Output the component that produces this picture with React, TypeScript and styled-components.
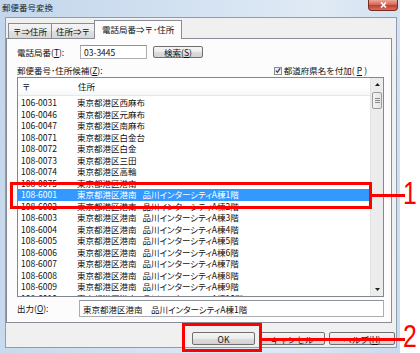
import React from 'react';
import styled, { createGlobalStyle } from 'styled-components';

interface Row {
  code: string;
  addr: string;
  bldg?: string;
  selected?: boolean;
}

const rows: Row[] = [
  { code: '106-0031', addr: '東京都港区西麻布' },
  { code: '106-0046', addr: '東京都港区元麻布' },
  { code: '106-0047', addr: '東京都港区南麻布' },
  { code: '108-0071', addr: '東京都港区白金台' },
  { code: '108-0072', addr: '東京都港区白金' },
  { code: '108-0073', addr: '東京都港区三田' },
  { code: '108-0074', addr: '東京都港区高輪' },
  { code: '108-0075', addr: '東京都港区港南' },
  { code: '108-6001', addr: '東京都港区港南', bldg: '品川インターシティA棟1階', selected: true },
  { code: '108-6002', addr: '東京都港区港南', bldg: '品川インターシティA棟2階' },
  { code: '108-6003', addr: '東京都港区港南', bldg: '品川インターシティA棟3階' },
  { code: '108-6004', addr: '東京都港区港南', bldg: '品川インターシティA棟4階' },
  { code: '108-6005', addr: '東京都港区港南', bldg: '品川インターシティA棟5階' },
  { code: '108-6006', addr: '東京都港区港南', bldg: '品川インターシティA棟6階' },
  { code: '108-6007', addr: '東京都港区港南', bldg: '品川インターシティA棟7階' },
  { code: '108-6008', addr: '東京都港区港南', bldg: '品川インターシティA棟8階' },
  { code: '108-6009', addr: '東京都港区港南', bldg: '品川インターシティA棟9階' },
  { code: '108-6010', addr: '東京都港区港南', bldg: '品川インターシティA棟10階' },
];

export default function App() {
  return (
    <Page>
      <GlobalStyle />
      <Window>
        <TitleBar>
          <Title>郵便番号変換</Title>
          <CloseButton>
            <svg width="7" height="6" viewBox="0 0 7 6">
              <path d="M1 0.5 L6 5.5 M6 0.5 L1 5.5" stroke="#fff" strokeWidth="1.6" />
            </svg>
          </CloseButton>
        </TitleBar>
        <Dialog>
          <TabStrip>
            <Tab>〒⇒住所</Tab>
            <Tab>住所⇒〒</Tab>
            <ActiveTab>電話局番⇒〒･住所</ActiveTab>
          </TabStrip>
          <Panel>
            <PhoneRow>
              <Label $width={63}>電話局番(<u>T</u>):</Label>
              <PhoneInput>03-3445</PhoneInput>
              <SmallButton>検索(<u>S</u>)</SmallButton>
            </PhoneRow>
            <CandRow>
              <Label>郵便番号･住所候補(<u>Z</u>):</Label>
              <CheckWrap>
                <CheckBox>
                  <svg width="7" height="7" viewBox="0 0 7 7">
                    <path d="M1 3.6 L2.8 5.6 L6 1" stroke="#1f3f6e" strokeWidth="1.4" fill="none" />
                  </svg>
                </CheckBox>
                都道府県名を付加(<u>P</u>)
              </CheckWrap>
            </CandRow>
            <ListBox>
              <ListBody>
                <Header>
                  <CodeCell>〒</CodeCell>
                  <AddrCell>住所</AddrCell>
                </Header>
                <Rows>
                  {rows.map((r) => (
                    <ListRow key={r.code} $selected={r.selected}>
                      <CodeCell>{r.code}</CodeCell>
                      <AddrCell>
                        {r.addr}
                        {r.bldg && <Bldg>{r.bldg}</Bldg>}
                      </AddrCell>
                    </ListRow>
                  ))}
                </Rows>
              </ListBody>
              <ScrollBar>
                <ScrollArrow>
                  <svg width="5" height="3" viewBox="0 0 5 3">
                    <path d="M2.5 0 L5 3 L0 3 Z" fill="#222" />
                  </svg>
                </ScrollArrow>
                <Track>
                  <Thumb>
                    <Grip />
                    <Grip />
                    <Grip />
                  </Thumb>
                </Track>
                <ScrollArrow>
                  <svg width="5" height="3" viewBox="0 0 5 3">
                    <path d="M0 0 L5 0 L2.5 3 Z" fill="#222" />
                  </svg>
                </ScrollArrow>
              </ScrollBar>
            </ListBox>
            <OutputRow>
              <Label $width={62}>出力(<u>O</u>):</Label>
              <OutputBox>東京都港区港南　品川インターシティA棟1階</OutputBox>
            </OutputRow>
          </Panel>
          <ButtonRow>
            <DialogButton $width={63}>OK</DialogButton>
            <DialogButton $width={66}>キャンセル</DialogButton>
            <DialogButton $width={66}>ヘルプ(<u>H</u>)</DialogButton>
          </ButtonRow>
        </Dialog>
      </Window>

      <MarkBox style={{ left: 10, top: 182, width: 362, height: 27 }} />
      <MarkLine style={{ left: 372, top: 194, width: 33 }} />
      <MarkDigit style={{ top: 178 }}>1</MarkDigit>

      <MarkBox style={{ left: 182, top: 323, width: 80, height: 29 }} />
      <MarkLine style={{ left: 262, top: 338, width: 143 }} />
      <MarkDigit style={{ top: 321 }}>2</MarkDigit>
    </Page>
  );
}

const GlobalStyle = createGlobalStyle`
  html, body {
    margin: 0;
    padding: 0;
    background: #ffffff;
  }
  body {
    font-family: "Noto Sans CJK JP", "Noto Sans", sans-serif;
    font-size: 8.5px;
    color: #111;
  }
  u {
    text-decoration-thickness: 1px;
    text-underline-offset: 1px;
  }
`;

const Page = styled.div`
  position: relative;
  width: 420px;
  height: 353px;
  overflow: hidden;
  display: flex;
`;

const Window = styled.div`
  width: 400px;
  height: 353px;
  display: flex;
  flex-direction: column;
  background: linear-gradient(100deg, #c3d6eb 0%, #d5e3f2 45%, #e0eaf5 70%, #c9dbee 100%);
`;

const TitleBar = styled.div`
  height: 17px;
  display: flex;
  justify-content: space-between;
  align-items: flex-start;
  padding: 0 2px 0 2px;
`;

const Title = styled.div`
  margin-top: 2px;
  line-height: 11px;
  color: #1b1b1b;
`;

const CloseButton = styled.div`
  width: 30px;
  height: 11px;
  box-sizing: border-box;
  display: flex;
  align-items: center;
  justify-content: center;
  border: 1px solid #7a2a22;
  border-top: none;
  border-radius: 0 0 4px 4px;
  background: linear-gradient(#e9a89c 0%, #d7695b 45%, #c2402f 55%, #d5705f 100%);
`;

const Dialog = styled.div`
  flex: 1;
  margin: 0 3px 5px 5px;
  border: 1px solid #8e9caf;
  background: #f0f0f0;
  display: flex;
  flex-direction: column;
`;

const TabStrip = styled.div`
  height: 20px;
  box-sizing: border-box;
  padding: 2px 0 0 2px;
  display: flex;
  align-items: flex-end;
`;

const Tab = styled.div`
  height: 15px;
  box-sizing: border-box;
  padding: 0 4px;
  display: flex;
  align-items: center;
  border: 1px solid #898c95;
  border-bottom: none;
  margin-right: -1px;
  background: linear-gradient(#f4f4f4 0%, #ececec 50%, #e0e0e0 51%, #d8d8d8 100%);
  line-height: 12px;
  white-space: nowrap;
`;

const ActiveTab = styled.div`
  position: relative;
  z-index: 1;
  height: 19px;
  width: 88px;
  box-sizing: border-box;
  margin-bottom: -1px;
  display: flex;
  align-items: center;
  justify-content: center;
  padding-bottom: 2px;
  border: 1px solid #898c95;
  border-bottom: none;
  background: #fcfcfc;
  white-space: nowrap;
`;

const Panel = styled.div`
  width: 386px;
  height: 285px;
  box-sizing: border-box;
  border: 1px solid #898c95;
  background: #fcfcfc;
  padding: 6px 7px 0 10px;
  display: flex;
  flex-direction: column;
`;

const PhoneRow = styled.div`
  height: 14px;
  display: flex;
  align-items: center;
`;

const Label = styled.div<{ $width?: number }>`
  width: ${(p) => (p.$width ? `${p.$width}px` : 'auto')};
  flex-shrink: 0;
  white-space: nowrap;
  line-height: 11px;
`;

const PhoneInput = styled.div`
  width: 67px;
  height: 14px;
  box-sizing: border-box;
  border: 1px solid #abadb3;
  border-top-color: #8f939b;
  background: #fff;
  padding-left: 3px;
  line-height: 12px;
`;

const SmallButton = styled.div`
  width: 50px;
  height: 12px;
  margin-left: 6px;
  box-sizing: border-box;
  border: 1px solid #707070;
  border-radius: 2px;
  background: linear-gradient(#f4f4f4 0%, #ebebeb 50%, #dddddd 51%, #d2d2d2 100%);
  display: flex;
  align-items: center;
  justify-content: center;
  line-height: 10px;
`;

const CandRow = styled.div`
  height: 13px;
  margin-top: 5px;
  display: flex;
  align-items: center;
`;

const CheckWrap = styled.div`
  margin-left: auto;
  margin-right: 17px;
  display: flex;
  align-items: center;
  gap: 2px;
  line-height: 11px;
  white-space: nowrap;
`;

const CheckBox = styled.div`
  width: 8px;
  height: 8px;
  box-sizing: border-box;
  border: 1px solid #8e8f8f;
  background: linear-gradient(#e6e6e6, #fbfbfb);
  display: flex;
  align-items: center;
  justify-content: center;
`;

const ListBox = styled.div`
  height: 220px;
  box-sizing: border-box;
  border: 1px solid #828790;
  background: #fff;
  display: flex;
`;

const ListBody = styled.div`
  flex: 1;
  display: flex;
  flex-direction: column;
  overflow: hidden;
`;

const Header = styled.div`
  height: 18px;
  flex-shrink: 0;
  box-sizing: border-box;
  display: flex;
  align-items: center;
  border-bottom: 1px solid #e3e8ee;
  background: linear-gradient(#ffffff 0%, #ffffff 55%, #f5f7f9 100%);
  padding-left: 1px;
`;

const Rows = styled.div`
  flex: 1;
  padding-top: 1px;
  overflow: hidden;
`;

const ListRow = styled.div<{ $selected?: boolean }>`
  height: 11.5px;
  display: flex;
  align-items: center;
  white-space: nowrap;
  background: ${(p) => (p.$selected ? '#3399ff' : 'transparent')};
  color: ${(p) => (p.$selected ? '#ffffff' : '#111111')};
`;

const CodeCell = styled.div`
  width: 53px;
  flex-shrink: 0;
  padding-left: 3px;
  line-height: 11px;
`;

const AddrCell = styled.div`
  padding-left: 3px;
  line-height: 11px;
  white-space: nowrap;
  font-feature-settings: 'palt';
`;

const Bldg = styled.span`
  margin-left: 6px;
`;

const ScrollBar = styled.div`
  width: 12px;
  display: flex;
  flex-direction: column;
  background: #ececec;
  border-left: 1px solid #e2e2e2;
`;

const ScrollArrow = styled.div`
  height: 13px;
  display: flex;
  align-items: center;
  justify-content: center;
`;

const Track = styled.div`
  flex: 1;
  padding: 1px 1px 0 1px;
`;

const Thumb = styled.div`
  height: 17px;
  box-sizing: border-box;
  border: 1px solid #9c9c9c;
  border-radius: 2px;
  background: linear-gradient(90deg, #f3f3f3, #e4e4e4);
  display: flex;
  flex-direction: column;
  align-items: center;
  justify-content: center;
  gap: 1px;
`;

const Grip = styled.div`
  width: 5px;
  height: 1px;
  background: #8a8a8a;
`;

const OutputRow = styled.div`
  margin-top: 3px;
  height: 17px;
  display: flex;
  align-items: center;
`;

const OutputBox = styled.div`
  flex: 1;
  height: 17px;
  box-sizing: border-box;
  border: 1px solid #abadb3;
  border-top-color: #8f939b;
  background: #fff;
  padding-left: 3px;
  display: flex;
  align-items: center;
  white-space: nowrap;
  font-feature-settings: 'palt';
`;

const ButtonRow = styled.div`
  margin-top: 9px;
  padding-right: 1px;
  display: flex;
  justify-content: flex-end;
  gap: 4px;
`;

const DialogButton = styled.div<{ $width: number }>`
  width: ${(p) => p.$width}px;
  height: 13px;
  box-sizing: border-box;
  border: 1px solid #707070;
  border-radius: 2px;
  background: linear-gradient(#f4f4f4 0%, #ebebeb 50%, #dddddd 51%, #d2d2d2 100%);
  display: flex;
  align-items: center;
  justify-content: center;
  line-height: 10px;
  white-space: nowrap;
`;

const MarkBox = styled.div`
  position: absolute;
  box-sizing: border-box;
  border: 3px solid #ff0000;
`;

const MarkLine = styled.div`
  position: absolute;
  height: 3px;
  background: #ff0000;
`;

const MarkDigit = styled.div`
  position: absolute;
  left: 403px;
  width: 17px;
  font-family: "Liberation Sans", Arial, sans-serif;
  font-size: 31px;
  line-height: 31px;
  color: #ff0000;
  transform: scaleX(0.8);
  transform-origin: left top;
`;
